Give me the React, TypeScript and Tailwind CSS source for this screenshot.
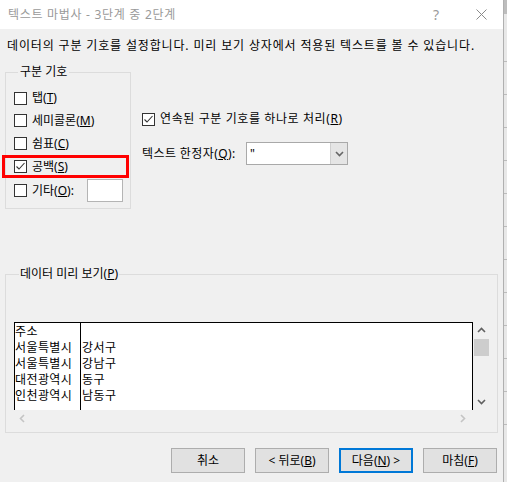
import React from "react";

const Box = ({ checked }: { checked?: boolean }) => (
  <span className="w-[13px] h-[13px] shrink-0 bg-white border border-[#333] flex items-center justify-center">
    {checked && (
      <svg width="11" height="11" viewBox="0 0 11 11">
        <path d="M1.5 5.5 L4 8 L9.5 2" fill="none" stroke="#333" strokeWidth="1.1" />
      </svg>
    )}
  </span>
);

const Chevron = ({ dir, color }: { dir: "up" | "down" | "left" | "right"; color: string }) => {
  const d =
    dir === "up"
      ? "M1 6 L4.5 2.5 L8 6"
      : dir === "down"
      ? "M1 3 L4.5 6.5 L8 3"
      : dir === "left"
      ? "M6 1 L2.5 4.5 L6 8"
      : "M3 1 L6.5 4.5 L3 8";
  return (
    <svg width="9" height="9" viewBox="0 0 9 9">
      <path d={d} fill="none" stroke={color} strokeWidth="1.6" />
    </svg>
  );
};

export default function App() {
  const col1 = ["주소", "서울특별시", "서울특별시", "대전광역시", "인천광역시"];
  const col2 = ["", "강서구", "강남구", "동구", "남동구"];
  return (
    <div className="w-[507px] h-[482px] flex overflow-hidden font-['Noto_Sans','Noto_Sans_CJK_KR',sans-serif] text-[12px] text-black">
      <div className="w-[503px] flex flex-col bg-[#f0f0f0]">
        {/* Title bar */}
        <div className="h-[29px] bg-white flex items-center pl-[8px] text-[#9a9a9a]">
          <span className="flex-1 leading-[16px] tracking-[0.7px]">텍스트 마법사 - 3단계 중 2단계</span>
          <span className="w-[20px] text-center text-[14px] leading-[16px]">?</span>
          <span className="w-[25px]" />
          <span className="w-[20px] flex items-center justify-center">
            <svg width="11" height="11" viewBox="0 0 11 11">
              <path d="M0.5 0.5 L10.5 10.5 M10.5 0.5 L0.5 10.5" stroke="#8a8a8a" strokeWidth="1" />
            </svg>
          </span>
          <span className="w-[12px]" />
        </div>

        {/* Description */}
        <div className="mt-[9px] ml-[7px] leading-[16px] tracking-[0.85px] whitespace-nowrap">
          데이터의 구분 기호를 설정합니다. 미리 보기 상자에서 적용된 텍스트를 볼 수 있습니다.
        </div>

        {/* Top section */}
        <div className="mt-[10px] flex">
          <fieldset className="ml-[5px] w-[126px] border border-[#dcdcdc] pl-[8px] pr-[7px] pt-[7px] pb-[5px]">
            <legend className="ml-[4px] px-[2px] leading-[16px]">구분 기호</legend>
            <div className="h-[22px] flex items-center gap-[5px]">
              <Box />
              <span>
                탭(<u>T</u>)
              </span>
            </div>
            <div className="h-[23px] flex items-center gap-[5px]">
              <Box />
              <span>
                세미콜론(<u>M</u>)
              </span>
            </div>
            <div className="h-[23px] flex items-center gap-[5px]">
              <Box />
              <span>
                쉼표(<u>C</u>)
              </span>
            </div>
            <div className="relative h-[23px] flex items-center gap-[5px]">
              <Box checked />
              <span>
                공백(<u>S</u>)
              </span>
              <div className="absolute left-[-12px] top-0 w-[127px] h-[23px] border-[3px] border-[#ff0000]" />
            </div>
            <div className="h-[25px] flex items-center gap-[5px]">
              <Box />
              <span>
                기타(<u>O</u>):
              </span>
              <span className="ml-auto w-[36px] h-[23px] bg-white border border-[#b4b4b4]" />
            </div>
          </fieldset>

          <div className="ml-[11px] pt-[47px] flex flex-col">
            <div className="h-[16px] flex items-center gap-[5px]">
              <Box checked />
              <span className="leading-[16px] tracking-[0.6px] whitespace-nowrap">
                연속된 구분 기호를 하나로 처리(<u>R</u>)
              </span>
            </div>
            <div className="mt-[15px] h-[23px] flex items-center">
              <span className="w-[104px] leading-[16px] tracking-[0.4px] whitespace-nowrap">
                텍스트 한정자(<u>Q</u>):
              </span>
              <div className="w-[102px] h-[23px] flex bg-white border border-[#a9a9a9]">
                <span className="flex-1 pl-[3px] leading-[21px]">"</span>
                <span className="w-[17px] h-full bg-[#e5e5e5] border-l border-[#cfcfcf] flex items-center justify-center">
                  <Chevron dir="down" color="#666" />
                </span>
              </div>
            </div>
          </div>
        </div>

        {/* Preview */}
        <fieldset className="mt-[57px] ml-[5px] w-[493px] border border-[#dcdcdc] pl-[8px] pt-[40px] pb-[6px]">
          <legend className="ml-[5px] px-[1px] leading-[16px]">
            데이터 미리 보기(<u>P</u>)
          </legend>
          <div className="flex">
            <div className="w-[459px] flex flex-col">
              <div className="h-[88px] bg-white border-t border-l border-r border-black flex text-[12px] tracking-[0.4px] leading-[16px] font-['Noto_Sans_CJK_KR',sans-serif]">
                <div className="w-[66px] border-r border-black flex flex-col">
                  {col1.map((t, i) => (
                    <div key={i} className="h-[16px] whitespace-nowrap">
                      {t}
                    </div>
                  ))}
                </div>
                <div className="flex-1 pl-[1px] flex flex-col">
                  {col2.map((t, i) => (
                    <div key={i} className="h-[16px] whitespace-nowrap">
                      {t}
                    </div>
                  ))}
                </div>
              </div>
              <div className="h-[16px] flex items-center justify-between pl-[4px] pr-[6px]">
                <Chevron dir="left" color="#c4c4c4" />
                <Chevron dir="right" color="#c4c4c4" />
              </div>
            </div>
            <div className="w-[17px] h-[88px] flex flex-col">
              <div className="h-[17px] flex items-center justify-center">
                <Chevron dir="up" color="#606060" />
              </div>
              <div className="h-[17px] mx-[1px] bg-[#cdcdcd]" />
              <div className="flex-1" />
              <div className="h-[17px] flex items-center justify-center">
                <Chevron dir="down" color="#606060" />
              </div>
            </div>
          </div>
        </fieldset>

        {/* Buttons */}
        <div className="mt-[15px] flex justify-end gap-[10px] pr-[6px]">
          <button className="w-[74px] h-[25px] bg-[#e1e1e1] border border-[#adadad] leading-[16px]">취소</button>
          <button className="w-[74px] h-[25px] bg-[#e1e1e1] border border-[#adadad] leading-[16px]">
            &lt; 뒤로(<u>B</u>)
          </button>
          <button className="w-[74px] h-[25px] bg-[#e1e1e1] border-2 border-[#0078d7] leading-[16px]">
            다음(<u>N</u>) &gt;
          </button>
          <button className="w-[74px] h-[25px] bg-[#e1e1e1] border border-[#adadad] leading-[16px]">
            마침(<u>F</u>)
          </button>
        </div>
      </div>
      <div className="w-[1px] bg-[#b0b0b0]" />
      <div className="w-[3px] flex flex-col bg-[#e8e8e8]">
        <div className="h-[14px] bg-[#bdbdbd]" />
        <div className="h-[48px] border-b border-[#bcbcbc]" />
        <div className="h-[33px] border-b border-[#bcbcbc]" />
        <div className="h-[33px] border-b border-[#bcbcbc]" />
        <div className="h-[33px] border-b border-[#bcbcbc]" />
        <div className="h-[33px] border-b border-[#bcbcbc]" />
        <div className="h-[33px] border-b border-[#bcbcbc]" />
        <div className="h-[33px] border-b border-[#bcbcbc]" />
        <div className="h-[33px] border-b border-[#bcbcbc]" />
        <div className="h-[33px] border-b border-[#bcbcbc]" />
        <div className="h-[33px] border-b border-[#bcbcbc]" />
        <div className="h-[33px] border-b border-[#bcbcbc]" />
        <div className="h-[33px] border-b border-[#bcbcbc]" />
      </div>
    </div>
  );
}
